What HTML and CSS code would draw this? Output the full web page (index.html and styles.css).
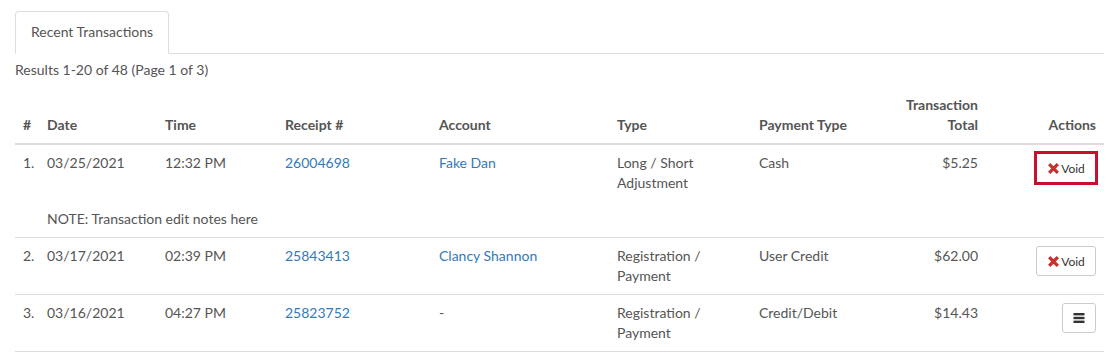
FILE: index.html
```html
<!DOCTYPE html>
<html lang="en">
  <head>
    <meta charset="UTF-8" />
    <title>Recent Transactions</title>
    <link rel="stylesheet" href="styles.css">
  </head>
  <body>
    <div class="page">
      <ul class="nav-tabs">
        <li class="active"><a href="#">Recent Transactions</a></li>
      </ul>

      <p class="results">Results 1-20 of 48 (Page 1 of 3)</p>

      <table class="tx-table">
        <colgroup>
          <col class="c-num" />
          <col class="c-date" />
          <col class="c-time" />
          <col class="c-receipt" />
          <col class="c-account" />
          <col class="c-type" />
          <col class="c-pay" />
          <col class="c-total" />
          <col class="c-actions" />
        </colgroup>
        <thead>
          <tr>
            <th>#</th>
            <th>Date</th>
            <th>Time</th>
            <th>Receipt #</th>
            <th>Account</th>
            <th>Type</th>
            <th>Payment Type</th>
            <th class="right">Transaction<br />Total</th>
            <th class="right">Actions</th>
          </tr>
        </thead>
        <tbody>
          <tr>
            <td>1.</td>
            <td>03/25/2021</td>
            <td>12:32 PM</td>
            <td><a href="#">26004698</a></td>
            <td><a href="#">Fake Dan</a></td>
            <td>Long / Short Adjustment</td>
            <td>Cash</td>
            <td class="right">$5.25</td>
            <td class="right">
              <button class="btn btn-void highlight">
                <svg class="icon-x" viewBox="0 0 12 12"><path d="M2 2 L10 10 M10 2 L2 10" /></svg>Void
              </button>
            </td>
          </tr>
          <tr class="note-row">
            <td></td>
            <td colspan="8">NOTE: Transaction edit notes here</td>
          </tr>
          <tr>
            <td>2.</td>
            <td>03/17/2021</td>
            <td>02:39 PM</td>
            <td><a href="#">25843413</a></td>
            <td><a href="#">Clancy Shannon</a></td>
            <td>Registration / Payment</td>
            <td>User Credit</td>
            <td class="right">$62.00</td>
            <td class="right">
              <button class="btn btn-void">
                <svg class="icon-x" viewBox="0 0 12 12"><path d="M2 2 L10 10 M10 2 L2 10" /></svg>Void
              </button>
            </td>
          </tr>
          <tr>
            <td>3.</td>
            <td>03/16/2021</td>
            <td>04:27 PM</td>
            <td><a href="#">25823752</a></td>
            <td>-</td>
            <td>Registration / Payment</td>
            <td>Credit/Debit</td>
            <td class="right">$14.43</td>
            <td class="right">
              <button class="btn btn-menu">
                <svg class="icon-bars" viewBox="0 0 12 12">
                  <rect x="0.5" y="1" width="11" height="2.4" />
                  <rect x="0.5" y="4.8" width="11" height="2.4" />
                  <rect x="0.5" y="8.6" width="11" height="2.4" />
                </svg>
              </button>
            </td>
          </tr>
        </tbody>
      </table>
    </div>
  </body>
</html>
```

FILE: styles.css
```css
body {
  font-family: "Lato", "Liberation Sans", sans-serif;
  font-size: 14px;
  line-height: 20px;
  color: #555;
  background-color: white;
  margin: 0;
  padding: 0;
}

a {
  color: #337ab7;
  text-decoration: none;
}

.page {
  padding: 11px 9px 0 15px;
}

/* Tabs */
.nav-tabs {
  list-style: none;
  margin: 0;
  padding: 0;
  display: flex;
  border-bottom: 1px solid #ddd;
}

.nav-tabs li {
  margin-bottom: -1px;
}

.nav-tabs li a {
  display: block;
  padding: 10px 15px 11px;
  font-size: 14px;
  color: #555;
  border: 1px solid transparent;
  border-radius: 4px 4px 0 0;
}

.nav-tabs li.active a {
  border-color: #ddd;
  border-bottom-color: white;
  background: white;
}

.results {
  margin: 6px 0 7px;
}

/* Table */
.tx-table {
  width: 100%;
  border-collapse: collapse;
  table-layout: fixed;
}

.c-num { width: 24px; }
.c-date { width: 118px; }
.c-time { width: 120px; }
.c-receipt { width: 154px; }
.c-account { width: 178px; }
.c-type { width: 142px; }
.c-pay { width: 129px; }
.c-total { width: 106px; }
.c-actions { width: 118px; }

.tx-table th,
.tx-table td {
  padding: 8px;
  text-align: left;
  vertical-align: top;
}

.tx-table th {
  font-weight: 700;
  vertical-align: bottom;
  border-bottom: 2px solid #ddd;
}

.tx-table tbody tr {
  border-top: 1px solid #ddd;
}

.tx-table tbody tr:first-child,
.tx-table tbody tr.note-row {
  border-top: none;
}

.tx-table tbody tr:last-child {
  border-bottom: 1px solid #ddd;
}

.tx-table .right {
  text-align: right;
}

.tx-table td.right {
  padding-top: 8px;
  padding-bottom: 0;
}

.note-row td {
  padding-top: 8px;
}

/* Buttons */
.btn {
  display: inline-flex;
  align-items: center;
  justify-content: center;
  height: 30px;
  padding: 0 9px;
  font-family: "Lato", "Liberation Sans", sans-serif;
  font-size: 12px;
  color: #333;
  background: white;
  border: 1px solid #ccc;
  border-radius: 3px;
  cursor: pointer;
  vertical-align: top;
}

.btn-void {
  width: 60px;
}

.btn-void.highlight {
  border-color: #c8102e;
  border-radius: 0;
  outline: 2px solid #c8102e;
}

.icon-x {
  width: 13px;
  height: 13px;
  margin-right: 1px;
  fill: none;
  stroke: #c9302c;
  stroke-width: 3;
}

.btn-menu {
  width: 34px;
  padding: 0;
}

.icon-bars {
  width: 12px;
  height: 12px;
  fill: #333;
}
```
